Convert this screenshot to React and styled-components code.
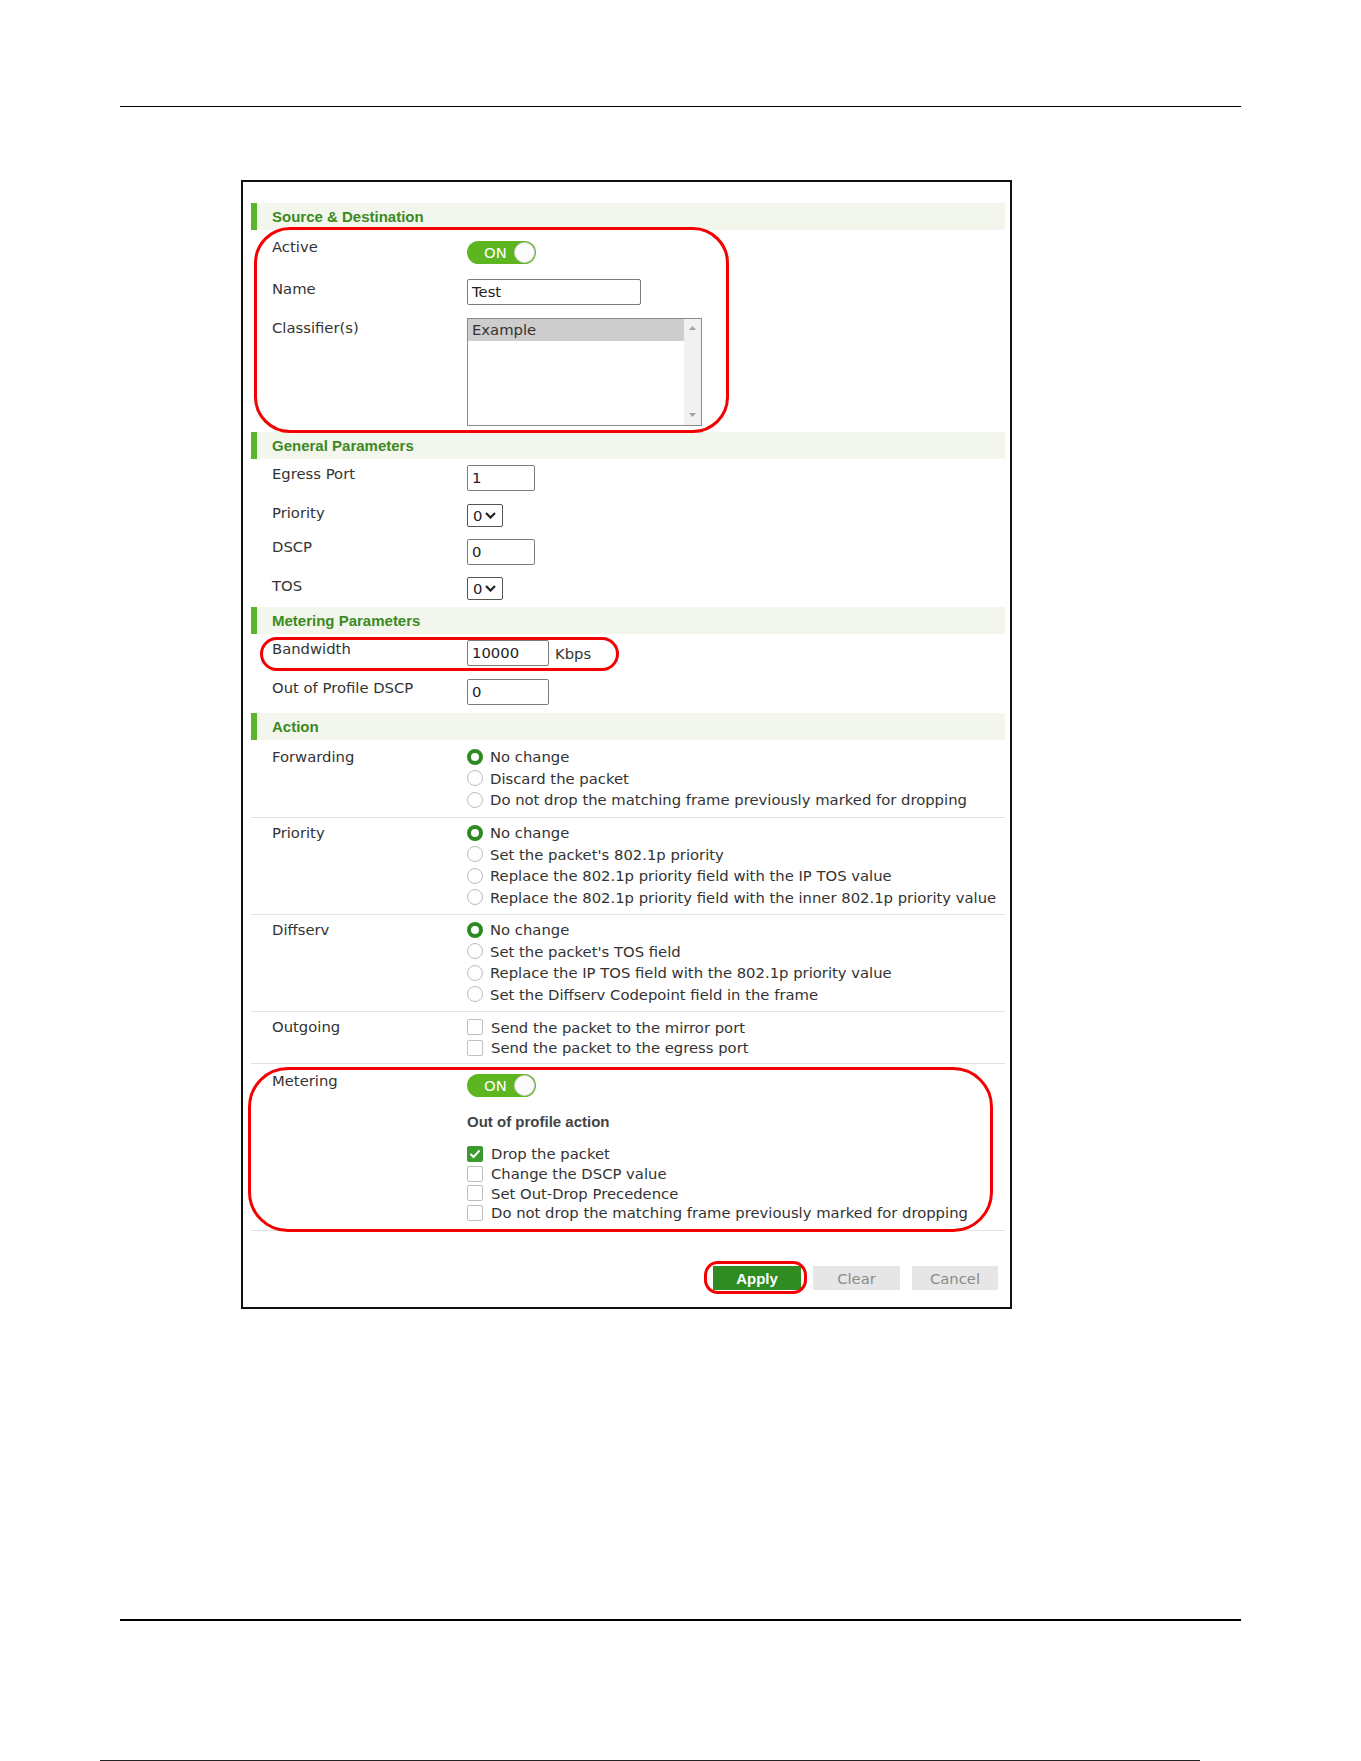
import React from "react";
import styled, { createGlobalStyle } from "styled-components";

const GlobalStyle = createGlobalStyle`
  html, body { margin: 0; padding: 0; background: #fff; }
  body { font-family: "DejaVu Sans", "Liberation Sans", sans-serif; }
  *, *::before, *::after { box-sizing: border-box; }
`;

const BOLD = `"Liberation Sans", Arial, sans-serif`;

const Page = styled.div`
  width: 1361px;
  height: 1761px;
  overflow: hidden;
  padding-top: 106px;
`;

const Rule = styled.div`
  margin-top: ${(p) => p.$top || 0}px;
  margin-left: ${(p) => p.$left ?? 120}px;
  width: ${(p) => p.$width ?? 1121}px;
  height: 0;
  border-top: ${(p) => p.$weight || 1}px solid ${(p) => p.$color || "#000"};
`;

const Panel = styled.div`
  position: relative;
  margin: 73px 0 0 241px;
  width: 771px;
  height: 1129px;
  border: 2px solid #111;
  padding: 21px 5px 0 8px;
`;

const SectionHead = styled.div`
  height: 27px;
  display: flex;
  align-items: center;
  background: #f3f6ed;
  border-left: 6px solid #5cb42a;
  padding-left: 15px;
  font: bold 15px ${BOLD};
  color: #3b8a1f;
`;

const Row = styled.div`
  display: flex;
  align-items: flex-start;
  height: ${(p) => p.$h}px;
  padding-top: ${(p) => p.$pt || 0}px;
`;

const Label = styled.div`
  flex: none;
  width: 216px;
  padding-left: 21px;
  padding-top: ${(p) => p.$pt || 0}px;
  line-height: ${(p) => p.$lh || 20}px;
  font-size: 14.8px;
  color: #333;
  white-space: nowrap;
`;

const Control = styled.div`
  margin-top: ${(p) => p.$mt || 0}px;
  display: flex;
  align-items: center;
  gap: 6px;
  font-size: 14.8px;
  color: #333;
`;

const Toggle = styled.div`
  width: 69px;
  height: 23px;
  border-radius: 12px;
  background: #5db520;
  display: flex;
  align-items: center;
  justify-content: space-between;
  padding: 0 1px 0 17px;
  color: #fff;
  font-size: 14.8px;
`;

const Knob = styled.span`
  width: 21px;
  height: 21px;
  border-radius: 50%;
  background: #fbfbfb;
  border: 1px solid #d2d2d2;
`;

const Field = styled.div`
  width: ${(p) => p.$w}px;
  height: 26px;
  border: 1px solid #7c7c7c;
  border-radius: 2px;
  padding-left: 4px;
  font-size: 14.8px;
  line-height: 24px;
  color: #222;
`;

const Select = styled.div`
  width: 36px;
  height: 23px;
  border: 1px solid #555;
  border-radius: 2px;
  display: flex;
  align-items: center;
  padding-left: 5px;
  gap: 3px;
  font-size: 14.8px;
  color: #222;
`;

const ListBox = styled.div`
  width: 235px;
  height: 108px;
  border: 1px solid #8a8a8a;
  display: flex;
`;

const ListItems = styled.div`
  flex: 1;
`;

const ListItem = styled.div`
  height: 22px;
  line-height: 22px;
  padding-left: 4px;
  background: ${(p) => (p.$selected ? "#cdcdcd" : "transparent")};
  font-size: 14.8px;
  color: #333;
`;

const ScrollTrack = styled.div`
  width: 17px;
  background: #f1f1f1;
  display: flex;
  flex-direction: column;
  align-items: center;
  justify-content: space-between;
  padding: 7px 0 8px;
`;

const Unit = styled.span`
  font-size: 14.8px;
  color: #333;
`;

const OptionBlock = styled.div`
  display: flex;
  align-items: flex-start;
  height: ${(p) => p.$h}px;
  padding-top: ${(p) => p.$pt || 0}px;
  border-bottom: 1px solid #e2e2e2;
`;

const OptionList = styled.div`
  display: flex;
  flex-direction: column;
  margin-top: ${(p) => p.$mt || 0}px;
`;

const Option = styled.div`
  height: ${(p) => p.$ih}px;
  display: flex;
  align-items: center;
  gap: ${(p) => p.$gap || 7}px;
  font-size: 14.8px;
  color: #333;
  white-space: nowrap;
`;

const Radio = styled.span`
  flex: none;
  width: 16px;
  height: 16px;
  border-radius: 50%;
  background: #fff;
  border: ${(p) => (p.$on ? "4.5px solid #2d8a21" : "1.5px solid #bcbcbc")};
`;

const Check = styled.span`
  flex: none;
  width: 16px;
  height: 16px;
  border-radius: 2px;
  border: 1.5px solid ${(p) => (p.$on ? "#3a9a2c" : "#bfbfbf")};
  background: ${(p) => (p.$on ? "#3a9a2c" : "#fff")};
  display: flex;
  align-items: center;
  justify-content: center;
`;

const MeterColumn = styled.div`
  display: flex;
  flex-direction: column;
  align-items: flex-start;
`;

const SubHead = styled.div`
  margin-top: 15px;
  line-height: 20px;
  font: bold 15px/20px ${BOLD};
  color: #444;
`;

const ButtonBar = styled.div`
  display: flex;
  justify-content: flex-end;
  gap: 12px;
  padding: 35px 7px 0 0;
`;

const Button = styled.div`
  width: ${(p) => p.$w}px;
  height: 24px;
  display: flex;
  align-items: center;
  justify-content: center;
  background: ${(p) => (p.$primary ? "#2f8c23" : "#e6e6e6")};
  color: ${(p) => (p.$primary ? "#fff" : "#8b8b8b")};
  font: ${(p) => (p.$primary ? `bold 15px ${BOLD}` : `14.8px "DejaVu Sans", sans-serif`)};
`;

const Callout = styled.div`
  position: absolute;
  left: ${(p) => p.$x}px;
  top: ${(p) => p.$y}px;
  width: ${(p) => p.$w}px;
  height: ${(p) => p.$h}px;
  border: 3px solid #f40000;
  border-radius: ${(p) => p.$r}px;
  pointer-events: none;
`;

const Chevron = () => (
  <svg width="11" height="7" viewBox="0 0 11 7">
    <polyline points="1,1 5.5,5.5 10,1" fill="none" stroke="#222" strokeWidth="2.2" />
  </svg>
);

const Arrow = ({ up }) => (
  <svg width="7" height="4" viewBox="0 0 7 4">
    <polygon points={up ? "0,4 3.5,0 7,4" : "0,0 3.5,4 7,0"} fill="#a3a3a3" />
  </svg>
);

const Tick = () => (
  <svg width="12" height="10" viewBox="0 0 12 10">
    <polyline points="1.5,5 4.5,8 10.5,1.5" fill="none" stroke="#fff" strokeWidth="2" />
  </svg>
);

const Switch = () => (
  <Toggle>
    ON
    <Knob />
  </Toggle>
);

const RadioGroup = ({ items, pt, h, label, first = true }) => (
  <OptionBlock $h={h} $pt={pt}>
    <Label $lh={21.5}>{label}</Label>
    <OptionList>
      {items.map((t, i) => (
        <Option key={t} $ih={21.5}>
          <Radio $on={first && i === 0} />
          {t}
        </Option>
      ))}
    </OptionList>
  </OptionBlock>
);

export default function App() {
  return (
    <>
      <GlobalStyle />
      <Page>
        <Rule />
        <Panel>
          <SectionHead>Source &amp; Destination</SectionHead>
          <Row $h={49} $pt={7}>
            <Label>Active</Label>
            <Control $mt={4}>
              <Switch />
            </Control>
          </Row>
          <Row $h={39}>
            <Label>Name</Label>
            <Control>
              <Field $w={174}>Test</Field>
            </Control>
          </Row>
          <Row $h={114}>
            <Label>Classifier(s)</Label>
            <Control>
              <ListBox>
                <ListItems>
                  <ListItem $selected>Example</ListItem>
                </ListItems>
                <ScrollTrack>
                  <Arrow up />
                  <Arrow />
                </ScrollTrack>
              </ListBox>
            </Control>
          </Row>

          <SectionHead>General Parameters</SectionHead>
          <Row $h={44} $pt={5}>
            <Label>Egress Port</Label>
            <Control $mt={1}>
              <Field $w={68}>1</Field>
            </Control>
          </Row>
          <Row $h={34}>
            <Label>Priority</Label>
            <Control $mt={1}>
              <Select>
                0
                <Chevron />
              </Select>
            </Control>
          </Row>
          <Row $h={39}>
            <Label>DSCP</Label>
            <Control $mt={2}>
              <Field $w={68}>0</Field>
            </Control>
          </Row>
          <Row $h={31}>
            <Label>TOS</Label>
            <Control $mt={1}>
              <Select>
                0
                <Chevron />
              </Select>
            </Control>
          </Row>

          <SectionHead>Metering Parameters</SectionHead>
          <Row $h={44} $pt={5}>
            <Label>Bandwidth</Label>
            <Control $mt={1}>
              <Field $w={82}>10000</Field>
              <Unit>Kbps</Unit>
            </Control>
          </Row>
          <Row $h={35}>
            <Label>Out of Profile DSCP</Label>
            <Control $mt={1}>
              <Field $w={82}>0</Field>
            </Control>
          </Row>

          <SectionHead>Action</SectionHead>
          <RadioGroup
            label="Forwarding"
            h={78}
            pt={6}
            items={[
              "No change",
              "Discard the packet",
              "Do not drop the matching frame previously marked for dropping",
            ]}
          />
          <RadioGroup
            label="Priority"
            h={97}
            pt={4}
            items={[
              "No change",
              "Set the packet's 802.1p priority",
              "Replace the 802.1p priority field with the IP TOS value",
              "Replace the 802.1p priority field with the inner 802.1p priority value",
            ]}
          />
          <RadioGroup
            label="Diffserv"
            h={97}
            pt={4}
            items={[
              "No change",
              "Set the packet's TOS field",
              "Replace the IP TOS field with the 802.1p priority value",
              "Set the Diffserv Codepoint field in the frame",
            ]}
          />
          <OptionBlock $h={52} $pt={5}>
            <Label $lh={20.5}>Outgoing</Label>
            <OptionList>
              {["Send the packet to the mirror port", "Send the packet to the egress port"].map((t) => (
                <Option key={t} $ih={20.5} $gap={8}>
                  <Check />
                  {t}
                </Option>
              ))}
            </OptionList>
          </OptionBlock>
          <OptionBlock $h={167}>
            <Label $pt={7}>Metering</Label>
            <MeterColumn>
              <Control $mt={10}>
                <Switch />
              </Control>
              <SubHead>Out of profile action</SubHead>
              <OptionList $mt={12}>
                {[
                  "Drop the packet",
                  "Change the DSCP value",
                  "Set Out-Drop Precedence",
                  "Do not drop the matching frame previously marked for dropping",
                ].map((t, i) => (
                  <Option key={t} $ih={19.7} $gap={8}>
                    <Check $on={i === 0}>{i === 0 && <Tick />}</Check>
                    {t}
                  </Option>
                ))}
              </OptionList>
            </MeterColumn>
          </OptionBlock>

          <ButtonBar>
            <Button $primary $w={88}>Apply</Button>
            <Button $w={87}>Clear</Button>
            <Button $w={86}>Cancel</Button>
          </ButtonBar>

          <Callout $x={11} $y={45} $w={475} $h={206} $r={36} />
          <Callout $x={17} $y={455} $w={359} $h={34} $r={17} />
          <Callout $x={5} $y={885} $w={745} $h={165} $r={40} />
          <Callout $x={461} $y={1079} $w={103} $h={33} $r={14} />
        </Panel>
        <Rule $top={310} $weight={2} />
        <Rule $top={139} $left={100} $width={1100} $color="#222" />
      </Page>
    </>
  );
}
